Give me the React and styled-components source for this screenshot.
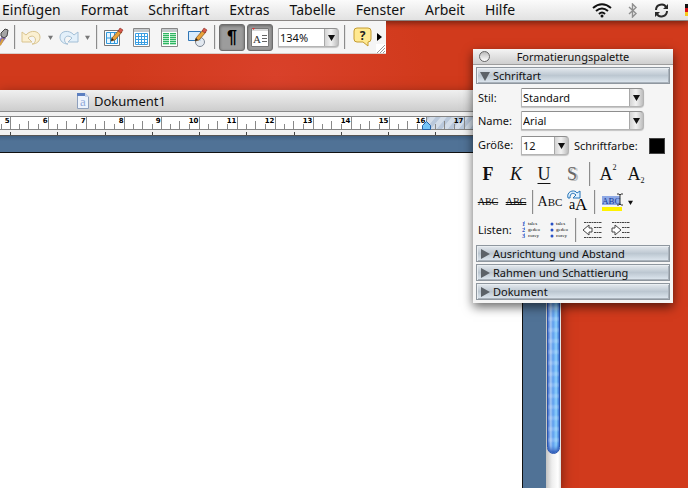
import styled, { createGlobalStyle } from 'styled-components'

const GlobalStyle = createGlobalStyle`
    * {
        box-sizing: border-box;
    }
    body {
        margin: 0;
        overflow: hidden;
        font-family: 'Noto Sans', 'Open Sans', sans-serif;
        color: #111;
    }
    button, select {
        font-family: inherit;
        color: inherit;
        margin: 0;
        padding: 0;
        border: 0;
        background: none;
    }
`

const Desktop = styled.div`
    position: relative;
    display: flex;
    flex-direction: column;
    height: 100vh;
    overflow: hidden;
    background: radial-gradient(ellipse at 40% 16%, #d9412a 0, #d13a1c 26%, #d13a1c 100%);
`

/* menu bar */

const MenuBar = styled.nav`
    position: relative;
    z-index: 1;
    display: flex;
    align-items: center;
    flex: none;
    height: 21px;
    background: linear-gradient(#fbfbfb, #ececec 60%, #e2e2e2);
    border-bottom: 1px solid #8a8684;
    box-shadow: 0 2px 6px rgba(0, 0, 0, 0.45);
`

const Menus = styled.div`
    display: flex;
    flex: 1;
    gap: 20px;
    padding-left: 2px;
`

const MenuItem = styled.button`
    font-size: 14px;
    line-height: 20px;
    white-space: nowrap;
`

const StatusIcons = styled.div`
    display: flex;
    align-items: center;
    gap: 16px;
`

/* toolbar */

const Toolbar = styled.div`
    position: relative;
    display: flex;
    align-items: center;
    flex: none;
    align-self: flex-start;
    height: 33px;
    width: 386px;
    background: #f5f5f5;
    border-bottom: 1px solid #d9cfcb;
    z-index: 2;
`

const Divider = styled.span`
    flex: none;
    width: 2px;
    height: 24px;
    margin: 0 ${p => p.$gap ?? 5}px;
    background: linear-gradient(90deg, #8c8c8c 50%, #e4e4e4 50%);
`

const ToolButton = styled.button`
    display: flex;
    align-items: center;
    justify-content: center;
    flex: none;
    width: ${p => p.$width || 28}px;
    height: 27px;
`

const Toggles = styled.div`
    display: flex;
    gap: 2px;
    margin-right: 5px;
`

const ToggleButton = styled(ToolButton)`
    width: 26px;
    border: 1px solid #6d6d6d;
    border-radius: 3px;
    background: #9c9c9c;
    box-shadow: inset 0 1px 3px rgba(0, 0, 0, 0.35);
    font-family: 'Liberation Sans', sans-serif;
    font-size: 18px;
    font-weight: bold;
    line-height: 20px;
    color: #000;
`

const Grip = styled.svg`
    position: absolute;
    right: 0;
    bottom: 0;
`

/* drop-downs */

const ComboBox = styled.span`
    display: flex;
    flex: none;
    width: ${p => p.$width}px;
    height: 19px;
    border: 1px solid #b4b4b4;
    border-top-color: #8e8e8e;
    border-radius: 0 4px 4px 0;
    background: linear-gradient(90deg, transparent calc(100% - 14px), #a8a8a8 calc(100% - 14px), #a8a8a8 calc(100% - 13px), #d4d4d4 calc(100% - 13px), #f2f2f2 calc(100% - 7px), #bdbdbd), #fff;
    box-shadow: 0 1px 1px rgba(0, 0, 0, 0.2);

    select {
        flex: 1;
        min-width: 0;
        appearance: none;
        padding-left: 1px;
        font-size: 11px;
        line-height: 17px;
        outline: 0;
    }

    svg {
        flex: none;
        align-self: center;
        margin-right: 3px;
        pointer-events: none;
    }
`

/* document window */

const DocWindow = styled.section`
    display: flex;
    flex-direction: column;
    flex: 1;
    min-height: 0;
    margin-top: 36px;
    margin-right: 127px;
    background: #f1f1f1;
    box-shadow: 0 4px 12px rgba(0, 0, 0, 0.5);
`

const TitleBar = styled.header`
    display: flex;
    align-items: center;
    gap: 5px;
    flex: none;
    height: 22px;
    padding-left: 77px;
    background: linear-gradient(#f0f0f0, #cdcdcd);
    border-bottom: 1px solid #8b8b8b;
    font-size: 13px;
    line-height: 20px;
`

const DocBody = styled.div`
    display: flex;
    flex: 1;
    min-height: 0;
`

const DocMain = styled.div`
    display: flex;
    flex-direction: column;
    flex: 1;
    min-width: 0;
`

const RulerSvg = styled.svg`
    flex: none;
    width: 100%;
    height: 24px;
    border-bottom: 1px solid #555;
    font-family: 'DejaVu Sans', sans-serif;
    font-size: 7px;
    font-weight: bold;
`

const Workspace = styled.div`
    display: flex;
    flex: 1;
    padding: 16px 23px 0 0;
    background: linear-gradient(#3f5f82, #507296 5px);
`

const Page = styled.div`
    flex: 1;
    background: #fff;
    border-top: 1px solid #111;
    border-right: 1px solid #111;
`

const ScrollTrack = styled.div`
    flex: none;
    width: 15px;
    background: linear-gradient(90deg, #c2c2c2, #eee 40%, #fff 80%, #ddd);
`

const ScrollThumb = styled.div`
    height: 91%;
    margin: 0 1px;
    border: 1px solid #2b55ae;
    border-radius: 0 0 7px 7px;
    background:
        repeating-linear-gradient(transparent 0 5px, rgba(255, 255, 255, 0.18) 7px 9px, transparent 11px),
        linear-gradient(90deg, #4b78cf, #a5c9f4 25%, #5e9ded 45%, #8bd0fd 75%, #4482dc);
    box-shadow: inset 0 -5px 4px -2px #2857b8;
`

/* formatting palette */

const Palette = styled.aside`
    position: absolute;
    top: 49px;
    right: 15px;
    z-index: 3;
    width: 200px;
    padding-bottom: 3px;
    background: #f5f5f5;
    box-shadow: 0 4px 10px rgba(0, 0, 0, 0.6);
    font-size: 11px;
    line-height: 16px;
`

const PaletteTitle = styled.header`
    display: flex;
    align-items: center;
    height: 16px;
    padding: 0 6px;
    background: linear-gradient(#f4f4f4, #cfcfcf);
    border-bottom: 1px solid #9d9d9d;

    h2 {
        flex: 1;
        margin: 0 11px 0 0;
        font-size: 11px;
        line-height: 15px;
        font-weight: normal;
        text-align: center;
    }
`

const CloseButton = styled.button`
    width: 11px;
    height: 11px;
    border: 1px solid #666;
    border-radius: 50%;
    background: linear-gradient(#bbb, #fff);
`

const SectionHeader = styled.button`
    display: flex;
    align-items: center;
    gap: 3px;
    width: calc(100% - 6px);
    height: 17px;
    margin: 2px 3px 0;
    padding-left: 3px;
    border: 1px solid #8f979f;
    background: linear-gradient(#e4e9ee, #bcc7d1 50%, #dfe8f0);
    box-shadow: inset 1px 1px #e9eef2, inset -1px -1px #a9b2bb;
    font-size: 11px;
    line-height: 15px;
`

const Fields = styled.div`
    display: grid;
    grid-template-columns: 43px 1fr;
    align-items: center;
    row-gap: 4px;
    padding: 4px 8px 0 5px;
`

const SizeRow = styled.div`
    display: flex;
    align-items: center;
    padding-top: 2px;

    label {
        flex: 1;
        padding-left: 5px;
    }
`

const Swatch = styled.button`
    width: 16px;
    height: 16px;
    background: #000;
    border: 1px solid #444;
`

const FormatRows = styled.div`
    padding-top: 5px;
`

const FormatRow = styled.div`
    display: flex;
    align-items: center;
    height: ${p => p.$label ? 27 : 28}px;
    padding-left: ${p => p.$label ? 5 : 1}px;
`

const FormatButton = styled.button`
    display: flex;
    align-items: center;
    justify-content: center;
    flex: none;
    width: 28px;
    height: 27px;
    font-family: 'Liberation Serif', serif;
    font-size: ${p => p.$size || 18}px;
    font-weight: ${p => p.$bold ? 'bold' : 'normal'};
    font-style: ${p => p.$italic ? 'italic' : 'normal'};
    text-decoration: ${p => p.$line || 'none'};
    text-decoration-thickness: 1px;
    text-underline-offset: 3px;
    color: ${p => p.$shadow ? '#666' : '#111'};
    text-shadow: ${p => p.$shadow ? '2px 1px #bbb' : 'none'};
    line-height: 18px;

    sup, sub {
        font-size: 8px;
        line-height: 8px;
    }
    sup {
        align-self: flex-start;
        margin-top: 3px;
    }
    sub {
        align-self: flex-end;
        margin-bottom: 3px;
    }
    small {
        font-size: 11px;
    }
`

const ListLabel = styled.span`
    width: 39px;
`

const Arrow = ({ color = '#111', size = 7 }) => (
    <svg width={size} height={size} viewBox="0 0 8 8"><path d="M0 1h8L4 8z" fill={color} /></svg>
)

const Combo = ({ id, value, width, label }) => (
    <ComboBox $width={width}>
        <select id={id} defaultValue={value} aria-label={label}>
            <option>{value}</option>
        </select>
        <Arrow />
    </ComboBox>
)

const Pencil = () => (
    <g>
        <path d="M9 11L16 3l3 2-7 8-4 1z" fill="#e9a33a" stroke="#8b5a20" strokeWidth=".8" />
        <path d="M15 4l2-3 3 2-2 3z" fill="#d8574a" stroke="#843128" strokeWidth=".6" />
        <path d="M8 14l1-3 2 2z" fill="#222" />
    </g>
)

const Brush = () => (
    <svg width="9" height="20" viewBox="0 0 9 20">
        <path d="M0 12l3-4 3 3-6 8z" fill="#8a6fae" />
        <path d="M0 18l3-6" stroke="#d9a23d" strokeWidth="2" />
        <path d="M1 6l4-4 3 1-1 6-3 2-3-2z" fill="#a5a5a5" stroke="#444" />
    </svg>
)

const Undo = ({ flip, fill, stroke }) => (
    <svg width="20" height="16" viewBox="0 0 20 16">
        <g transform={flip ? 'matrix(-1 0 0 1 20 0)' : undefined}>
            <path d="M1 3v10h10l-4-4c4-4 9-1 7 4-1 1-1 2-3 2 5 0 8-3 8-7 0-6-9-8-14-2z" fill={fill} stroke={stroke} />
        </g>
    </svg>
)

const TableDraw = () => (
    <svg width="21" height="20" viewBox="0 0 21 20">
        <path d="M1.500 3.500h15v15h-15z" fill="#fff" stroke="#777" />
        <path d="M3.500 5.500h11v11h-11z" fill="#e7f5ff" stroke="#3199dc" />
        <path d="M3 11h11M7.500 6v11M11.500 6v11" stroke="#3199dc" />
        <Pencil />
    </svg>
)

const TableGrid = () => (
    <svg width="17" height="19" viewBox="0 0 17 19">
        <path d="M.5.5h16v18H.5z" fill="#fff" stroke="#888" />
        <path d="M1 1h15v3H1z" fill="#c5c9cc" />
        <path d="M2.500 5.500h12v11h-12zM5.500 5.500v11M8.500 5.500v11M11.500 5.500v11M2.500 8.500h12M2.500 11.500h12M2.500 14.500h12" fill="none" stroke="#3b9fe2" />
    </svg>
)

const Columns = () => (
    <svg width="17" height="19" viewBox="0 0 17 19">
        <path d="M.5.5h16v18H.5z" fill="#fff" stroke="#888" />
        <path d="M1 1h15v3H1z" fill="#c5c9cc" />
        <path d="M2 5h6v12H2zM9 5h6v12H9z" fill="#b5ebc6" />
        <path d="M2 5.500h6M2 7.500h6M2 9.500h6M2 11.500h6M2 13.500h6M2 15.500h6M9 5.500h6M9 7.500h6M9 9.500h6M9 11.500h6M9 13.500h6M9 15.500h6" stroke="#2fb563" />
    </svg>
)

const Drawing = () => (
    <svg width="21" height="21" viewBox="0 0 21 21">
        <path d="M1.500 4.500h12v9h-12z" fill="#d8ecfc" stroke="#2f75b5" />
        <circle cx="13" cy="15" r="4.500" fill="#dfe6ef" fillOpacity=".8" stroke="#7d8794" />
        <Pencil />
    </svg>
)

const LayoutIcon = () => (
    <svg width="18" height="20" viewBox="0 0 18 20" fontFamily="Liberation Serif, serif" fontWeight="normal">
        <path d="M.5 1.500h17v18H.5z" fill="#fff" stroke="#777" />
        <path d="M1 2h16v2H1z" fill="#d9d9d9" />
        <path d="M1 1h3l-1.500 2z" fill="#d33" />
        <text x="2" y="16" fontSize="11" fill="#333">A</text>
        <path d="M11 8.500h5M11 11.500h5M11 14.500h5" stroke="#666" />
    </svg>
)

const HelpIcon = () => (
    <svg width="19" height="20" viewBox="0 0 19 20" fontFamily="Open Sans, sans-serif">
        <path d="M4 1h11q3 0 3 3v8q0 3-3 3v4l-5-4H4q-3 0-3-3V4q0-3 3-3z" fill="#ffe991" stroke="#c49b30" />
        <text x="9.500" y="13" fontSize="12" fontWeight="bold" textAnchor="middle" fill="#222">?</text>
    </svg>
)

const Wifi = () => (
    <svg width="20" height="15" viewBox="0 0 20 15" fill="none" stroke="#111" strokeWidth="2">
        <path d="M1 5q9-7.500 18 0M4 8q6-5 12 0M7 11q3-3 6 0" />
        <circle cx="10" cy="13" r="1.500" fill="#111" stroke="none" />
    </svg>
)

const Bluetooth = () => (
    <svg width="10" height="15" viewBox="0 0 10 15" fill="none" stroke="#8f8f8f" strokeWidth="1.400">
        <path d="M1 4l7 6.500-3.500 3.500V1L8 4.500 1 11" />
    </svg>
)

const Sync = () => (
    <svg width="15" height="15" viewBox="0 0 15 15" fill="none" stroke="#2a2a2a" strokeWidth="2">
        <path d="M2 7c0-6 8-7 10-3M13 8c0 6-8 7-10 3" />
        <path d="M14 1v5H9zM1 14V9h5z" fill="#2a2a2a" stroke="none" />
    </svg>
)

const Flag = () => (
    <svg width="3" height="12" viewBox="0 0 3 12">
        <path d="M0 0h3v4H0z" fill="#111" />
        <path d="M0 4h3v4H0z" fill="#d8121a" />
        <path d="M0 8h3v4H0z" fill="#f8c81c" />
    </svg>
)

const DocIcon = () => (
    <svg width="12" height="16" viewBox="0 0 12 16" fontFamily="Liberation Serif, serif">
        <path d="M.5.5H8L11.500 4v11.500H.5z" fill="#edf3fc" stroke="#8ea0bd" />
        <path d="M0 0h8v3H0z" fill="#5c7fc0" />
        <path d="M8 0v4h4z" fill="#c5d3ea" />
        <text x="3" y="13" fontSize="13" fill="#91aada">a</text>
    </svg>
)

// one centimetre on the ruler at the current zoom, and the gap between tab stops
const CM = 37.85
const TAB = 47.25
const marks = Array.from({ length: 13 }, (_, i) => i + 5)
const quarters = [1, 2, 3]

const Ruler = () => (
    <RulerSvg>
        <defs>
            <pattern id="margin" width="11" height="11" patternUnits="userSpaceOnUse" patternTransform="skewX(-40)">
                <path d="M0 0h11v11H0z" fill="#d3dde9" />
                <path d="M0 0h5v11H0z" fill="#b9c8db" />
            </pattern>
        </defs>
        <rect y="4" width="100%" height="14" fill="#fff" />
        <rect x="427" y="5" width="100%" height="12" fill="url(#margin)" />
        <path d="M0 4.500h1000M0 17.500h1000" stroke="#858585" />
        {marks.map((n, i) => {
            const x = Math.round(10 + i * CM) + 0.5
            return (
                <g key={n}>
                    <text x={x - 1} y="11" textAnchor="end" fill="#000">{n}</text>
                    <path d={`M${x} 5v12`} stroke="#8a8a8a" />
                    {quarters.map(q => (
                        <path key={q} d={`M${Math.round(x + q * CM / 4) - 0.5} ${q === 2 ? 9 : 12}V17`} stroke="#888" />
                    ))}
                    <path d={`M${Math.round(10 + i * TAB) + 0.5} 20v3`} stroke="#444" />
                </g>
            )
        })}
        <path d="M1.500 12v5" stroke="#888" />
        <path d="M426.500 9.500l4 4v4h-8v-4z" fill="#73c4f7" stroke="#2563a8" />
    </RulerSvg>
)

const CaseIcon = () => (
    <svg width="24" height="26" viewBox="0 0 24 26">
        <text x="3" y="20" fontSize="14">a</text>
        <text x="9" y="21" fontSize="17">A</text>
        <path d="M2 9C0 2 9 0 11 4l3-2v7H7l3-3C7 3 4 4 4 9z" fill="#dff1ff" stroke="#2775b8" />
    </svg>
)

const HighlightIcon = () => (
    <svg width="21" height="21" viewBox="0 0 21 21">
        <path d="M0 4h18v9H0z" fill="#8ea9e6" />
        <path d="M0 15h20v4H0z" fill="#fff200" />
        <text x="0" y="12" fontSize="9" fill="#163a98">ABC</text>
        <path d="M15 2h2l1 1 1-1h2M18 3v9M15 13h2l1-1 1 1h2" fill="none" stroke="#333" />
    </svg>
)

const ListIcon = ({ numbered }) => (
    <svg width="20" height="20" viewBox="0 0 20 20" fontSize="5">
        {numbered && <path d="M3.500 1v18" stroke="#9db6ea" strokeDasharray="3 3" />}
        {['tales', 'gedeo', 'corey'].map((word, i) => (
            <g key={word}>
                {numbered
                    ? <text x="1" y={6 + i * 6} fontSize="6" fontWeight="bold" fill="#1f51c0">{i + 1}</text>
                    : <circle cx="3" cy={4 + i * 6} r="1.500" fill="#2750c4" />}
                <text x="7" y={5 + i * 6}>{word}</text>
            </g>
        ))}
    </svg>
)

const IndentIcon = ({ right }) => (
    <svg width="20" height="20" viewBox="0 0 20 20" fill="none" stroke="#444">
        <path d="M1 2.500h18M1 17.500h18" strokeDasharray="2 .5" />
        <path d="M11 7.500h8M11 12.500h8" strokeDasharray="2 .5" />
        <path d={right ? 'M1 8h3V5l6 5-6 5v-3H1z' : 'M9 8H6V5l-6 5 6 5v-3h3z'} fill="#fff" />
    </svg>
)

const SectionToggle = ({ open, children }) => (
    <SectionHeader aria-expanded={!!open}>
        <svg width="10" height="10" viewBox="0 0 10 10">
            <path d={open ? 'M0 1h10L5 10z' : 'M1 0l9 5-9 5z'} fill="#5c6268" />
        </svg>
        {children}
    </SectionHeader>
)

const menus = ['Einfügen', 'Format', 'Schriftart', 'Extras', 'Tabelle', 'Fenster', 'Arbeit', 'Hilfe']

const TopToolbar = () => (
    <Toolbar>
        <ToolButton $width={9} aria-label="Format übertragen"><Brush /></ToolButton>
        <Divider />
        <ToolButton $width={20} aria-label="Rückgängig"><Undo fill="#fbf0d2" stroke="#d9c48f" /></ToolButton>
        <ToolButton $width={18} aria-label="Rückgängig-Liste"><Arrow color="#777" size={5} /></ToolButton>
        <ToolButton $width={20} aria-label="Wiederholen"><Undo flip fill="#e3f0fa" stroke="#a3bfd6" /></ToolButton>
        <ToolButton $width={16} aria-label="Wiederholen-Liste"><Arrow color="#777" size={5} /></ToolButton>
        <Divider $gap={1} />
        <ToolButton aria-label="Tabelle zeichnen"><TableDraw /></ToolButton>
        <ToolButton aria-label="Tabelle einfügen"><TableGrid /></ToolButton>
        <ToolButton aria-label="Spalten"><Columns /></ToolButton>
        <ToolButton aria-label="Zeichnen"><Drawing /></ToolButton>
        <Divider $gap={3} />
        <Toggles>
            <ToggleButton aria-pressed="true">¶</ToggleButton>
            <ToggleButton aria-pressed="true" aria-label="Formatierungspalette"><LayoutIcon /></ToggleButton>
        </Toggles>
        <Combo value="134%" width={61} label="Zoom" />
        <Divider />
        <ToolButton $width={22} aria-label="Hilfe"><HelpIcon /></ToolButton>
        <ToolButton $width={12} aria-label="Mehr">
            <svg width="5" height="8" viewBox="0 0 5 8"><path d="M0 0l5 4-5 4z" /></svg>
        </ToolButton>
        <Grip width="10" height="9" viewBox="0 0 10 9">
            <path d="M0 0h10v9H0z" fill="#fff" />
            <path d="M1 9l8-8M4 9l5-5M7 9l2-2" stroke="#999" />
        </Grip>
    </Toolbar>
)

const FormatPalette = () => (
    <Palette>
        <PaletteTitle>
            <CloseButton aria-label="Schließen" />
            <h2>Formatierungspalette</h2>
        </PaletteTitle>
        <SectionToggle open>Schriftart</SectionToggle>
        <Fields>
            <label htmlFor="stil">Stil:</label>
            <Combo id="stil" value="Standard" width={123} />
            <label htmlFor="name">Name:</label>
            <Combo id="name" value="Arial" width={123} />
            <label htmlFor="size">Größe:</label>
            <SizeRow>
                <Combo id="size" value="12" width={48} />
                <label htmlFor="color">Schriftfarbe:</label>
                <Swatch id="color" />
            </SizeRow>
        </Fields>
        <FormatRows>
            <FormatRow>
                <FormatButton $bold>F</FormatButton>
                <FormatButton $italic>K</FormatButton>
                <FormatButton $line="underline">U</FormatButton>
                <FormatButton $shadow>S</FormatButton>
                <Divider $gap={3} />
                <FormatButton>A<sup>2</sup></FormatButton>
                <FormatButton>A<sub>2</sub></FormatButton>
            </FormatRow>
            <FormatRow>
                <FormatButton $size={10} $line="line-through">ABC</FormatButton>
                <FormatButton $size={10} $line="line-through double">ABC</FormatButton>
                <Divider $gap={2} />
                <FormatButton $size={14}><span>A<small>BC</small></span></FormatButton>
                <FormatButton aria-label="Groß-/Kleinschreibung"><CaseIcon /></FormatButton>
                <Divider $gap={2} />
                <FormatButton aria-label="Hervorheben"><HighlightIcon /></FormatButton>
                <ToolButton $width={8} aria-label="Hervorhebungsfarbe"><Arrow size={5} /></ToolButton>
            </FormatRow>
            <FormatRow $label>
                <ListLabel>Listen:</ListLabel>
                <FormatButton aria-label="Nummerierung"><ListIcon numbered /></FormatButton>
                <FormatButton aria-label="Aufzählung"><ListIcon /></FormatButton>
                <Divider $gap={2} />
                <FormatButton aria-label="Einzug verkleinern"><IndentIcon /></FormatButton>
                <FormatButton aria-label="Einzug vergrößern"><IndentIcon right /></FormatButton>
            </FormatRow>
        </FormatRows>
        <SectionToggle>Ausrichtung und Abstand</SectionToggle>
        <SectionToggle>Rahmen und Schattierung</SectionToggle>
        <SectionToggle>Dokument</SectionToggle>
    </Palette>
)

const App = () => (
    <Desktop>
        <GlobalStyle />
        <MenuBar>
            <Menus>
                {menus.map(name => <MenuItem key={name}>{name}</MenuItem>)}
            </Menus>
            <StatusIcons>
                <Wifi />
                <Bluetooth />
                <Sync />
                <Flag />
            </StatusIcons>
        </MenuBar>
        <TopToolbar />
        <DocWindow>
            <TitleBar><DocIcon />Dokument1</TitleBar>
            <DocBody>
                <DocMain>
                    <Ruler />
                    <Workspace><Page /></Workspace>
                </DocMain>
                <ScrollTrack><ScrollThumb /></ScrollTrack>
            </DocBody>
        </DocWindow>
        <FormatPalette />
    </Desktop>
)

export default App
